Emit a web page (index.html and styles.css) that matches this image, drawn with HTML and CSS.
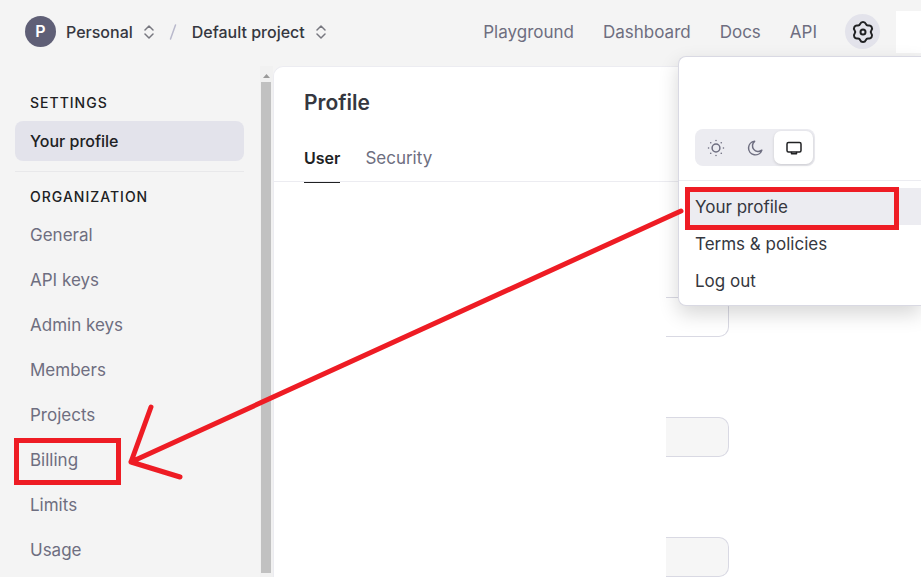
FILE: index.html
```html
<!DOCTYPE html>
<html lang="en">
<head>
  <meta charset="UTF-8" />
  <title>Profile</title>
  <link rel="stylesheet" href="styles.css">
</head>
<body>

  <!-- Top bar -->
  <header class="topbar">
    <div class="breadcrumb">
      <span class="avatar">P</span>
      <button class="switcher">Personal
        <svg width="10" height="14" viewBox="0 0 10 14"><path d="M1 5l4-4 4 4M1 9l4 4 4-4"/></svg>
      </button>
      <svg class="slash" width="8" height="16" viewBox="0 0 8 16"><path d="M6.500 1L1.500 15"/></svg>
      <button class="switcher">Default project
        <svg width="10" height="14" viewBox="0 0 10 14"><path d="M1 5l4-4 4 4M1 9l4 4 4-4"/></svg>
      </button>
    </div>
    <nav class="topnav">
      <a href="#">Playground</a>
      <a href="#">Dashboard</a>
      <a href="#">Docs</a>
      <a href="#">API</a>
    </nav>
    <button class="gear" aria-label="Settings">
      <svg width="24" height="24" viewBox="0 0 24 24"><path d="M9.190 3.960A3 3 0 0 1 14.810 3.960A2.500 2.500 0 0 0 17.560 5.550A3 3 0 0 1 20.370 10.410A2.500 2.500 0 0 0 20.370 13.590A3 3 0 0 1 17.560 18.450A2.500 2.500 0 0 0 14.810 20.040A3 3 0 0 1 9.190 20.040A2.500 2.500 0 0 0 6.440 18.450A3 3 0 0 1 3.630 13.590A2.500 2.500 0 0 0 3.630 10.410A3 3 0 0 1 6.440 5.550A2.500 2.500 0 0 0 9.190 3.960z"/><circle cx="12" cy="12" r="2.500"/></svg>
    </button>
    <div class="account"></div>
  </header>

  <div class="layout">
    <!-- Sidebar -->
    <aside class="sidebar">
      <h2>Settings</h2>
      <a class="active" href="#">Your profile</a>
      <hr>
      <h2>Organization</h2>
      <a href="#">General</a>
      <a href="#">API keys</a>
      <a href="#">Admin keys</a>
      <a href="#">Members</a>
      <a href="#">Projects</a>
      <a class="marked" href="#">Billing</a>
      <a href="#">Limits</a>
      <a href="#">Usage</a>
    </aside>
    <div class="scrollbar">
      <svg width="7" height="4" viewBox="0 0 7 4"><path d="M0 4l3.500-4L7 4z"/></svg>
      <div class="thumb"></div>
    </div>

    <!-- Main content -->
    <main class="content">
      <h1>Profile</h1>
      <div class="tabs">
        <button class="tab selected">User</button>
        <button class="tab">Security</button>
      </div>
      <form class="fields">
        <input type="text" aria-label="Name">
        <input type="text" aria-label="Email" disabled>
        <input type="text" aria-label="Phone number" disabled>
      </form>
    </main>
  </div>

  <!-- Settings menu -->
  <div class="menu">
    <div class="themes">
      <button aria-label="Light">
        <svg width="18" height="18" viewBox="0 0 18 18"><circle cx="9" cy="9" r="3.900"/><path class="rays" d="M9 1.500v.1M9 16.400v.1M1.500 9h.1M16.400 9h.1M3.700 3.700l.1.1M14.200 14.200l.1.1M14.300 3.700l-.1.1M3.800 14.200l-.1.1"/></svg>
      </button>
      <button aria-label="Dark">
        <svg width="18" height="18" viewBox="0 0 18 18"><path d="M8.600 2.300A6.800 6.800 0 1 0 15.800 11.200 5.600 5.600 0 0 1 8.600 2.300z"/></svg>
      </button>
      <button class="current" aria-label="System">
        <svg width="18" height="18" viewBox="0 0 18 18"><rect x="2" y="3.500" width="14" height="9.500" rx="1.500"/><path d="M6.500 13.500v1.300h5v-1.300"/></svg>
      </button>
    </div>
    <hr>
    <a class="highlight marked" href="#">Your profile</a>
    <a href="#">Terms &amp; policies</a>
    <a href="#">Log out</a>
  </div>

  <!-- Arrow from the menu entry to Billing -->
  <svg class="arrow" width="560" height="290" viewBox="126 200 560 290">
    <path d="M681 211L131 462M151 407L131 462L180 477"/>
  </svg>

</body>
</html>
```

FILE: styles.css
```css
* {
  margin: 0;
  padding: 0;
  box-sizing: border-box;
}

body {
  position: relative;
  display: flex;
  flex-direction: column;
  min-height: 100vh;
  background-color: #f4f4f4;
  color: #353740;
  font-family: Inter, "Liberation Sans", sans-serif;
  font-size: 17px;
  line-height: 24px;
  overflow: hidden;
}

a {
  color: #6e6e80;
  text-decoration: none;
}

button {
  border: none;
  background: none;
  color: inherit;
  font: inherit;
  cursor: pointer;
}

svg {
  fill: none;
  stroke: currentColor;
  stroke-width: 1.5;
  stroke-linecap: round;
  stroke-linejoin: round;
}

/* Top bar */
.topbar {
  display: flex;
  align-items: center;
  height: 66px;
  padding: 0 0 3px 25px;
}

.breadcrumb {
  display: flex;
  align-items: center;
  font-size: 16px;
  font-weight: 500;
}

.avatar {
  width: 31px;
  height: 31px;
  margin-right: 10px;
  border-radius: 50%;
  background-color: #5f5f76;
  color: #fff;
  font-weight: 600;
  line-height: 30px;
  text-align: center;
}

.switcher {
  display: flex;
  align-items: center;
  gap: 11px;
}

.switcher svg {
  color: #77777f;
}

.slash {
  margin: 0 15px;
  color: #b9b9cc;
}

.topnav {
  display: flex;
  gap: 29px;
  margin-left: auto;
}

.gear {
  display: flex;
  align-items: center;
  justify-content: center;
  width: 35px;
  height: 35px;
  margin-left: 28px;
  border-radius: 50%;
  background-color: #e3e3eb;
  color: #202123;
}

.gear svg {
  stroke-width: 2;
}

.account {
  width: 25px;
  height: 42px;
  margin-left: 16px;
  background-color: #fff;
}

/* Sidebar */
.layout {
  display: flex;
  flex: 1;
}

.sidebar {
  width: 260px;
  padding: 25px 16px 0 15px;
}

.sidebar h2 {
  padding: 0 15px;
  margin-bottom: 6px;
  color: #202123;
  font-size: 14px;
  font-weight: 500;
  letter-spacing: 1px;
  text-transform: uppercase;
}

.sidebar a {
  display: block;
  height: 40px;
  margin-bottom: 5px;
  padding: 0 15px;
  border-radius: 8px;
  line-height: 40px;
}

.sidebar a:last-child {
  margin-bottom: 0;
}

.sidebar .active {
  background-color: #e3e3eb;
  color: #202123;
  font-size: 16px;
  font-weight: 500;
}

.sidebar hr {
  margin: 10px 0 13px;
  border: none;
  border-top: 1px solid #e8e8ea;
}

.scrollbar {
  display: flex;
  flex-direction: column;
  align-items: center;
  width: 13px;
  padding: 8px 1px 4px 0;
  background-color: #f1f1f1;
}

.scrollbar svg {
  fill: #9a9a9a;
  stroke: none;
}

.thumb {
  flex: 1;
  width: 10px;
  margin-top: 4px;
  background-color: #c1c1c1;
}

/* Main content */
.content {
  flex: 1;
  border: 1px solid #ececf1;
  border-width: 1px 0 0 1px;
  border-top-left-radius: 10px;
  background-color: #fff;
}

.content h1 {
  padding: 22px 30px 0;
  font-size: 21px;
  font-weight: 600;
  line-height: 28px;
}

.tabs {
  display: flex;
  gap: 25px;
  height: 65px;
  padding: 0 30px;
  border-bottom: 1px solid #ececf1;
}

.tab {
  height: 66px;
  padding-top: 16px;
  color: #6e6e80;
}

.tab.selected {
  border-bottom: 1px solid #202123;
  color: #202123;
  font-size: 16px;
  font-weight: 600;
}

.fields {
  display: flex;
  flex-direction: column;
  gap: 80px;
  padding: 115px 0 0 392px;
}

.fields input {
  width: 63px;
  height: 40px;
  border: 1px solid #d9d9e3;
  border-left: none;
  border-radius: 0 10px 10px 0;
  background-color: #fff;
}

.fields input:disabled {
  background-color: #f6f6f6;
}

/* Settings menu */
.menu {
  position: absolute;
  top: 56px;
  right: 0;
  width: 243px;
  padding: 72px 0 6px;
  border: 1px solid #d9d9e3;
  border-right: none;
  border-radius: 8px 0 0 8px;
  background-color: #fff;
  box-shadow: 0 8px 20px rgba(0, 0, 0, 0.16);
}

.themes {
  display: flex;
  width: 120px;
  height: 37px;
  margin-left: 16px;
  padding: 2px;
  border-radius: 8px;
  background-color: #ececf1;
}

.themes button {
  display: flex;
  flex: 1;
  align-items: center;
  justify-content: center;
  border-radius: 7px;
  color: #6e6e80;
}

.themes .current {
  background-color: #fff;
  box-shadow: 0 1px 3px rgba(0, 0, 0, 0.15);
  color: #202123;
}

.menu hr {
  margin: 14px 0 7px;
  border: none;
  border-top: 1px solid #ececf1;
}

.menu a {
  display: block;
  height: 37px;
  margin-left: 6px;
  padding-left: 10px;
  color: #353740;
  line-height: 38px;
}

.menu .highlight {
  background-color: #ececf1;
}

/* Red marks */
.marked {
  position: relative;
}

.marked::after {
  content: "";
  position: absolute;
  top: -2px;
  left: -1px;
  box-sizing: border-box;
  width: 107px;
  height: 47px;
  border: 5px solid #ee1c24;
}

.menu .marked::after {
  top: -1px;
  left: 0;
  width: 214px;
  height: 43px;
}

.arrow {
  position: absolute;
  top: 200px;
  left: 126px;
  color: #ee1c24;
  stroke-width: 5;
}
```
